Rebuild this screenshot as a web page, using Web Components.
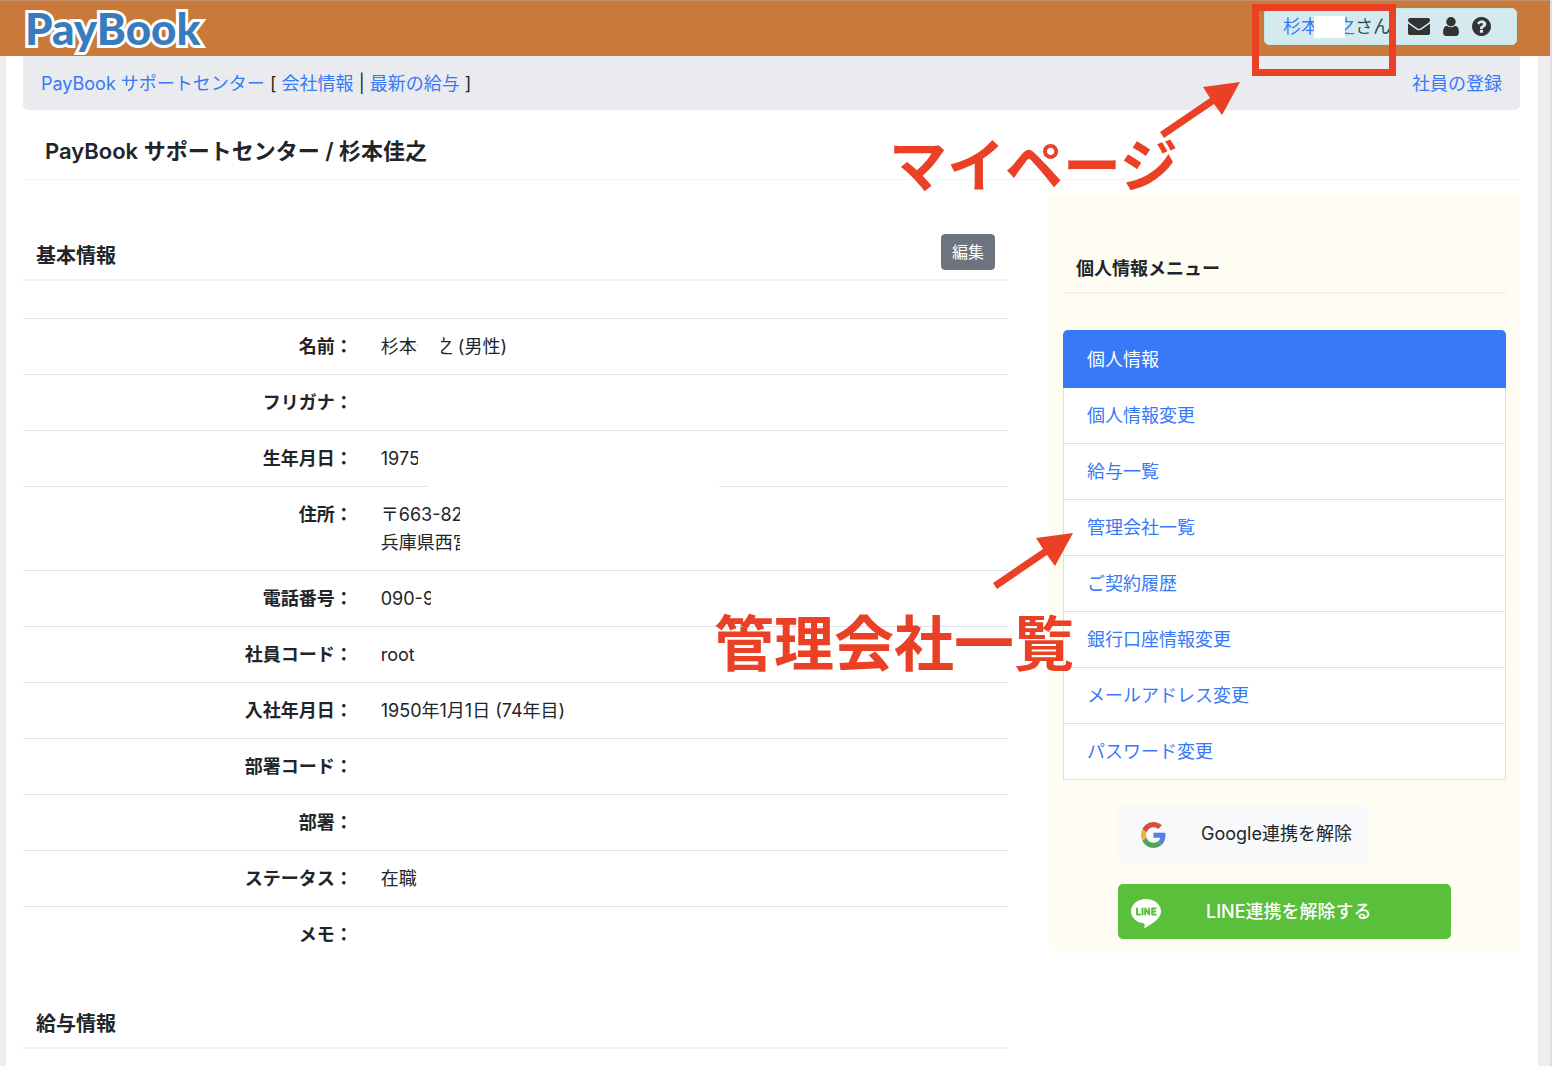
<!DOCTYPE html>
<html lang="ja">
<head>
<meta charset="utf-8">
<title>PayBook サポートセンター</title>
<style>
  body {
    margin: 0;
    background: #fff;
    color: #212529;
    font-family: Inter, "Noto Sans CJK JP", sans-serif;
    font-size: 18px;
    line-height: 28px;
    --link: #3779f6;
    --rule: #dee2e6;
    --mark: #ea4026;
  }
</style>
</head>
<body>
<pb-app></pb-app>

<script>
function define(name, html) {
  const template = document.createElement('template');
  template.innerHTML = html;
  customElements.define(name, class extends HTMLElement {
    constructor() {
      super();
      this.attachShadow({ mode: 'open' }).append(template.content.cloneNode(true));
    }
  });
}

/* Logo */
define('pb-logo', `
  <style>
    :host { display: block; }
    a {
      display: block; color: #387cbd; text-decoration: none;
      font: 900 44px/54px Lato, sans-serif;
      -webkit-text-stroke: 6px #fff; paint-order: stroke fill; stroke-linejoin: round;
    }
  </style>
  <a href="#">PayBook</a>`);

/* Box with the signed-in user and shortcuts */
define('pb-user-box', `
  <style>
    :host {
      display: flex; align-items: center; box-sizing: border-box; height: 37px; margin-top: 7px;
      padding: 0 25px 0 18px; background: #d5eaee; border: 1px solid #bee5eb;
      border-radius: 5px; color: #1f5560;
    }
    a { color: var(--link); text-decoration: none; display: flex; }
    .name { position: relative; }
    .name::after {
      content: ""; position: absolute; left: 31px; top: 3px; width: 31px; height: 22px; background: #fff;
    }
    .icons { display: flex; align-items: center; gap: 13px; margin-left: 17px; }
    svg { display: block; fill: #333; }
  </style>
  <a class="name" href="#">杉本佳之</a>さん
  <span class="icons">
    <a href="#" aria-label="メッセージ"><svg width="22" height="17" viewBox="0 256 1792 1408" preserveAspectRatio="none"><path d="M1792 710v794q0 66-47 113t-113 47h-1472q-66 0-113-47t-47-113v-794q44 49 101 87 362 246 497 345 57 42 92.500 65.500t94.500 48 110 24.500h2q51 0 110-24.500t94.500-48 92.500-65.500q170-123 498-345 57-39 100-87zm0-294q0 79-49 151t-122 123q-376 261-468 325-10 7-42.500 31t-54 39.500-52 34.500-57.500 28-50 9h-2q-23 0-50-9t-57.500-28-52-34.500-54-39.500-42.500-31q-91-64-262-182.500t-205-142.500q-62-42-117-115.500t-55-136.500q0-78 41.500-130t118.500-52h1472q65 0 112.500 47t47.500 113z"/></svg></a>
    <a href="#" aria-label="マイページ"><svg width="16" height="19" viewBox="256 128 1280 1536"><path d="M1536 1399q0 109-62.500 187t-150.500 78h-854q-88 0-150.500-78t-62.500-187q0-85 8.500-160.500t31.500-152 58.500-131 94-89 134.500-34.500q131 128 313 128t313-128q76 0 134.500 34.500t94 89 58.500 131 31.500 152 8.500 160.500zm-256-887q0 159-112.500 271.500t-271.500 112.500-271.500-112.500-112.500-271.500 112.500-271.500 271.500-112.500 271.500 112.500 112.500 271.500z"/></svg></a>
    <a href="#" aria-label="ヘルプ"><svg width="19" height="19" viewBox="128 128 1536 1536"><path d="M1024 1376v-192q0-14-9-23t-23-9h-192q-14 0-23 9t-9 23v192q0 14 9 23t23 9h192q14 0 23-9t9-23zm256-672q0-88-55.500-163t-138.500-116-170-41q-243 0-371 213-15 24 8 42l132 100q7 6 19 6 16 0 25-12 53-68 86-92 34-24 86-24 48 0 85.500 26t37.500 59q0 38-20 61t-68 45q-63 28-115.500 86.500t-52.500 125.500v36q0 14 9 23t23 9h192q14 0 23-9t9-23q0-19 21.500-49.500t54.500-49.500q32-18 49-28.500t46-35 44.500-48 28-60.500 12.500-81zm384 192q0 209-103 385.500t-279.500 279.500-385.500 103-385.500-103-279.500-279.500-103-385.500 103-385.500 279.500-279.500 385.500-103 385.500 103 279.500 279.500 103 385.500z"/></svg></a>
  </span>`);

define('pb-header', `
  <style>
    :host {
      display: flex; justify-content: space-between; align-items: flex-start;
      box-sizing: border-box; height: 56px; padding: 0 33px 0 25px;
      background: #c97939; border-top: 1px solid #c3906a;
    }
  </style>
  <pb-logo></pb-logo>
  <pb-user-box></pb-user-box>`);

define('pb-company-bar', `
  <style>
    :host {
      display: flex; justify-content: space-between; padding: 14px 18px 12px;
      background: #e9ebef; border-radius: 0 0 5px 5px;
    }
    a { color: var(--link); text-decoration: none; }
  </style>
  <span><a href="#">PayBook サポートセンター</a> [ <a href="#">会社情報</a> | <a href="#">最新の給与</a> ]</span>
  <a href="#">社員の登録</a>`);

/* Page title */
define('pb-page-title', `
  <style>
    :host { display: block; border-bottom: 1px solid #f3f4f5; }
    h1 { margin: 0; padding: 27px 22px 14px; font-size: 22px; line-height: 28px; font-weight: 600; }
  </style>
  <h1><slot></slot></h1>`);

/* Heading of a section, with room for an action */
define('pb-section-head', `
  <style>
    :host {
      display: flex; justify-content: space-between; align-items: flex-end;
      padding: 40px 13px 9px; min-height: 36px; border-bottom: 2px solid #f1f2f3;
    }
    h2 { margin: 0; font-size: 20px; line-height: 28px; font-weight: 700; }
  </style>
  <h2><slot></slot></h2>
  <slot name="action"></slot>`);

define('pb-edit-button', `
  <style>
    :host { display: block; }
    button {
      display: block; height: 36px; padding: 0 10px; border: 1px solid #6c757d; border-radius: 4px;
      background: #6c757d; color: #fff; font: inherit; font-size: 16px; line-height: 24px;
    }
  </style>
  <button type="button"><slot></slot></button>`);

/* Table of the profile */
define('pb-profile', `
  <style>
    :host { display: block; margin-top: 37px; }
    table { width: 100%; border-collapse: separate; border-spacing: 0; table-layout: fixed; }
    th, td { padding: 14px 15px 13px; border-top: 1px solid var(--rule); vertical-align: top; }
    th { width: 35%; box-sizing: border-box; text-align: right; font-weight: 700; }
    td { padding-left: 13px; text-align: left; }
    /* white patches that hide private details */
    .mask { position: relative; }
    .mask::after { content: ""; position: absolute; top: 0; height: 28px; width: 40px; background: #fff; }
    .name::after { left: 37px; width: 23px; }
    .year::after { left: 37px; }
    .zip::after { left: 79px; }
    .tel::after { left: 50px; }
    .day { position: relative; }
    .day::after {
      content: ""; position: absolute; left: 60px; bottom: -2px; width: 291px; height: 4px; background: #fff;
    }
  </style>
  <table>
    <tr><th scope="row">名前：</th><td><span class="mask name">杉本佳之</span> (男性)</td></tr>
    <tr><th scope="row">フリガナ：</th><td></td></tr>
    <tr><th scope="row">生年月日：</th><td class="day"><span class="mask year">1975</span></td></tr>
    <tr><th scope="row">住所：</th><td><span class="mask zip">〒663-82</span><br><span class="mask zip">兵庫県西宮</span></td></tr>
    <tr><th scope="row">電話番号：</th><td><span class="mask tel">090-9</span></td></tr>
    <tr><th scope="row">社員コード：</th><td>root</td></tr>
    <tr><th scope="row">入社年月日：</th><td>1950年1月1日 (74年目)</td></tr>
    <tr><th scope="row">部署コード：</th><td></td></tr>
    <tr><th scope="row">部署：</th><td></td></tr>
    <tr><th scope="row">ステータス：</th><td>在職</td></tr>
    <tr><th scope="row">メモ：</th><td></td></tr>
  </table>`);

/* Entry of the side menu */
define('pb-menu-item', `
  <style>
    :host { display: block; background: #fff; border: 1px solid #dfdfdf; border-top: 0; }
    :host([active]) { background: #3779f6; border-color: #3779f6; border-radius: 5px 5px 0 0; padding-top: 2px; }
    a { display: block; padding: 14px 23px 13px; color: var(--link); text-decoration: none; }
    :host([active]) a { color: #fff; }
  </style>
  <a href="#"><slot></slot></a>`);

define('pb-link-buttons', `
  <style>
    :host { display: flex; flex-direction: column; align-items: flex-start; gap: 21px; padding: 26px 55px 0; }
    button { display: flex; align-items: center; border: 0; border-radius: 5px; font: inherit; text-align: left; white-space: nowrap; }
    svg { display: block; flex: none; }
    .google { height: 57px; padding: 0 16px 2px 23px; gap: 35px; background: #f8f9fb; color: #212529; border-radius: 4px; }
    .google svg { margin-top: 3px; }
    .line { width: 100%; height: 55px; padding: 0 13px; gap: 45px; background: #5abf3a; color: #fff; font-weight: 500; }
    .line svg { margin-top: 3px; }
  </style>
  <button class="google" type="button">
    <svg width="25" height="26" viewBox="0 0 48 48" preserveAspectRatio="none">
      <path fill="#d24f3f" d="M24 9.500c3.500 0 6.700 1.200 9.200 3.600l6.900-6.900C35.900 2.400 30.500 0 24 0 14.600 0 6.500 5.400 2.600 13.200l8 6.200C12.400 13.700 17.700 9.500 24 9.500z"/>
      <path fill="#5180e8" d="M47 24.500c0-1.600-.2-3.100-.4-4.500H24v9h12.900c-.6 3-2.200 5.500-4.700 7.200l7.700 6C44.400 38 47 31.800 47 24.500z"/>
      <path fill="#eab63c" d="M10.500 28.600c-.5-1.500-.8-3-.8-4.600s.3-3.100.8-4.600l-8-6.200C.9 16.500 0 20.100 0 24s.9 7.500 2.600 10.800z"/>
      <path fill="#53a45b" d="M24 48c6.500 0 11.900-2.100 15.900-5.800l-7.700-6c-2.200 1.500-4.900 2.300-8.200 2.300-6.300 0-11.600-4.200-13.500-9.900l-8 6.200C6.500 42.600 14.600 48 24 48z"/>
    </svg>
    Google連携を解除
  </button>
  <button class="line" type="button">
    <svg width="30" height="29" viewBox="0 0 30 29" aria-hidden="true">
      <path fill="#fff" d="M15 0C6.700 0 0 5.500 0 12.200c0 6 5.300 11.100 12.500 12.100 1.300.3 1.300.7 1.100 2.100l-.2 1.700c-.1.700.3 1 1 .6 3.500-1.800 10.500-6.500 13.400-10.200C29.200 16.500 30 14.400 30 12.200 30 5.500 23.300 0 15 0z"/>
      <path fill="none" stroke="#5abf3a" stroke-width="2" stroke-linejoin="round" stroke-linecap="round" d="M6 9.500v6h3M11.500 9.500v6M14.200 15.500v-6l4 6v-6M24.500 9.500h-3.300v6h3.300M21.200 12.500h3"/>
    </svg>
    LINE連携を解除する
  </button>`);

define('pb-side-menu', `
  <style>
    :host { display: block; padding: 61px 14px 14px; background: #fffdf1; border-radius: 5px; }
    h2 { margin: 0 0 36px; padding: 0 13px 9px; font-size: 18px; line-height: 28px; font-weight: 700; border-bottom: 2px solid #f1f1ee; }
    nav { display: block; }
  </style>
  <h2>個人情報メニュー</h2>
  <nav>
    <pb-menu-item active>個人情報</pb-menu-item>
    <pb-menu-item>個人情報変更</pb-menu-item>
    <pb-menu-item>給与一覧</pb-menu-item>
    <pb-menu-item>管理会社一覧</pb-menu-item>
    <pb-menu-item>ご契約履歴</pb-menu-item>
    <pb-menu-item>銀行口座情報変更</pb-menu-item>
    <pb-menu-item>メールアドレス変更</pb-menu-item>
    <pb-menu-item>パスワード変更</pb-menu-item>
  </nav>
  <pb-link-buttons></pb-link-buttons>`);

/* Callouts drawn over the page */
define('pb-callouts', `
  <style>
    :host { position: absolute; inset: 0; overflow: hidden; pointer-events: none; color: var(--mark); }
    .frame { position: absolute; left: 1252px; top: 4px; width: 144px; height: 72px; box-sizing: border-box; border: 7px solid var(--mark); }
    .label { position: absolute; font-size: 60px; line-height: 72px; font-weight: 700; white-space: nowrap; }
    .my { left: 889px; top: 130px; font-size: 58px; }
    .company { left: 714px; top: 608px; }
    svg { position: absolute; fill: var(--mark); }
    .a1 { left: 1160px; top: 81px; }
    .a2 { left: 993px; top: 532px; }
  </style>
  <div class="frame"></div>
  <svg class="a1" width="82" height="58" viewBox="0 0 82 58"><path d="M80 1 43 6l7 11L0 51l4 6 50-34 8 11z"/></svg>
  <div class="label my">マイページ</div>
  <svg class="a2" width="82" height="58" viewBox="0 0 82 58"><path d="M80 1 43 6l7 11L0 51l4 6 50-34 8 11z"/></svg>
  <div class="label company">管理会社一覧</div>`);

define('pb-app', `
  <style>
    :host { display: block; position: relative; height: 100vh; overflow: hidden; }
    .window {
      margin-right: 4px; min-height: 100%; border-right: 2px solid #dfdee5; background: #eee;
    }
    main { display: block; margin: 0 12px 0 6px; padding: 0 18px 40px 17px; min-height: 100vh; background: #fff; }
    .columns { display: flex; align-items: flex-start; gap: 41px; margin-top: 14px; }
    .left { flex: 985 1 0; min-width: 0; }
    pb-side-menu { flex: 443 1 0; }
  </style>
  <div class="window">
    <pb-header></pb-header>
    <main>
      <pb-company-bar></pb-company-bar>
      <pb-page-title>PayBook サポートセンター / 杉本佳之</pb-page-title>
      <div class="columns">
        <div class="left">
          <pb-section-head>基本情報<pb-edit-button slot="action">編集</pb-edit-button></pb-section-head>
          <pb-profile></pb-profile>
          <pb-section-head>給与情報</pb-section-head>
        </div>
        <pb-side-menu></pb-side-menu>
      </div>
    </main>
  </div>
  <pb-callouts></pb-callouts>`);
</script>
</body>
</html>
